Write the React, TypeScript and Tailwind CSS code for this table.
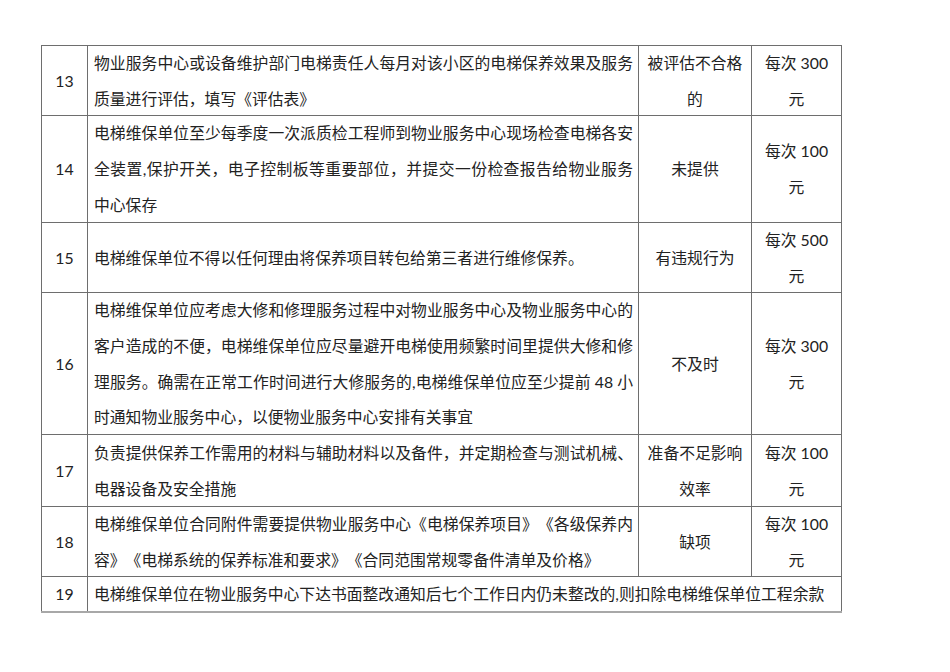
const rows = [
  {
    no: "13",
    desc: [
      "物业服务中心或设备维护部门电梯责任人每月对该小区的电梯保养效果及服务",
      "质量进行评估，填写《评估表》",
    ],
    penalty: ["被评估不合格", "的"],
    price: "300",
  },
  {
    no: "14",
    desc: [
      "电梯维保单位至少每季度一次派质检工程师到物业服务中心现场检查电梯各安",
      "全装置,保护开关，电子控制板等重要部位，并提交一份检查报告给物业服务",
      "中心保存",
    ],
    penalty: ["未提供"],
    price: "100",
  },
  {
    no: "15",
    desc: ["电梯维保单位不得以任何理由将保养项目转包给第三者进行维修保养。"],
    penalty: ["有违规行为"],
    price: "500",
  },
  {
    no: "16",
    desc: [
      "电梯维保单位应考虑大修和修理服务过程中对物业服务中心及物业服务中心的",
      "客户造成的不便，电梯维保单位应尽量避开电梯使用频繁时间里提供大修和修",
      "理服务。确需在正常工作时间进行大修服务的,电梯维保单位应至少提前 48 小",
      "时通知物业服务中心，以便物业服务中心安排有关事宜",
    ],
    penalty: ["不及时"],
    price: "300",
  },
  {
    no: "17",
    desc: [
      "负责提供保养工作需用的材料与辅助材料以及备件，并定期检查与测试机械、",
      "电器设备及安全措施",
    ],
    penalty: ["准备不足影响", "效率"],
    price: "100",
  },
  {
    no: "18",
    desc: [
      "电梯维保单位合同附件需要提供物业服务中心《电梯保养项目》《各级保养内",
      "容》《电梯系统的保养标准和要求》《合同范围常规零备件清单及价格》",
    ],
    penalty: ["缺项"],
    price: "100",
  },
];

function Lines({ lines }: { lines: string[] }) {
  return (
    <div className="w-full">
      {lines.map((l, i) => (
        <div
          key={i}
          className={
            i < lines.length - 1
              ? "whitespace-nowrap text-justify [text-align-last:justify]"
              : "whitespace-nowrap"
          }
        >
          {l}
        </div>
      ))}
    </div>
  );
}

export default function App() {
  return (
    <div
      className="w-[950px] h-[672px] bg-white pt-[45px] pl-[41px] text-[#222] text-[15.8px] leading-[35.7px] [text-spacing-trim:space-all]"
      style={{ fontFamily: "Lato, 'Noto Sans CJK SC', sans-serif" }}
    >
      <div className="inline-grid grid-cols-[45px_550px_112px_89px] grid-rows-[69px_106px_69px_141px_71px_69px_34px] gap-px bg-[#6e6e6e] pt-px px-px border-b-2 border-[#a8a8a8]">
        {rows.map((r) => (
          <div key={r.no} className="contents">
            <div className="bg-white flex items-center justify-center">{r.no}</div>
            <div className="bg-white flex items-center pl-[6px] pr-[5px]">
              <Lines lines={r.desc} />
            </div>
            <div className="bg-white flex flex-col items-center justify-center">
              {r.penalty.map((p, i) => (
                <div key={i}>{p}</div>
              ))}
            </div>
            <div className="bg-white flex flex-col items-center justify-center">
              <div>每次 {r.price}</div>
              <div>元</div>
            </div>
          </div>
        ))}
        <div className="bg-white flex items-center justify-center">19</div>
        <div className="bg-white col-span-3 flex items-center pl-[6px] whitespace-nowrap">
          电梯维保单位在物业服务中心下达书面整改通知后七个工作日内仍未整改的,则扣除电梯维保单位工程余款
        </div>
      </div>
    </div>
  );
}
